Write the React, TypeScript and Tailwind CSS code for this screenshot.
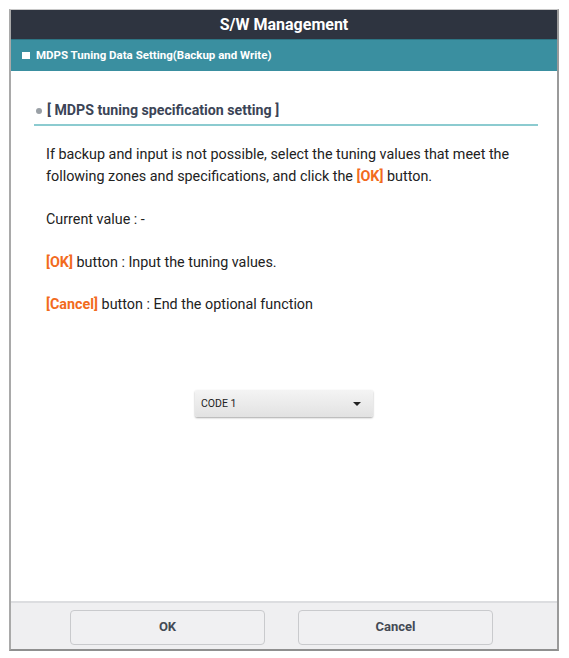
import React from 'react'

const Hl = ({ children }: { children: React.ReactNode }) => (
  <span className="font-bold text-[#f26b1d]">{children}</span>
)

export default function App() {
  return (
    <div className="w-[569px] h-[658px] bg-white pt-[9px] pl-[9px] font-['Roboto',sans-serif]">
      <div className="w-[550px] h-[642px] flex flex-col border-t border-[#c8c8c8] border-l-2 border-l-[#a9a9a9] border-r-2 border-r-[#9a9a9a] border-b-2 border-b-[#8f8f8f]">
        {/* Title bar */}
        <div className="h-[29px] bg-[#2e3440] flex items-center justify-center">
          <span className="text-white font-bold text-[16px]">S/W Management</span>
        </div>

        {/* Sub header */}
        <div className="h-[32px] bg-[#3a8fa0] border-t border-[#2d7584] flex items-center pl-[11px] gap-[6px]">
          <span className="w-[8px] h-[7px] bg-white" />
          <span className="text-white font-bold text-[11.5px]">MDPS Tuning Data Setting(Backup and Write)</span>
        </div>

        {/* Content */}
        <div className="flex-1 bg-white pl-[23px] pr-[19px] pt-[29px]">
          <div className="flex items-center gap-[5px] pl-[2px] pb-[3px] border-b-2 border-[#8ccbd0]">
            <span className="w-[6px] h-[6px] rounded-full bg-[#9aa0a6]" />
            <span className="font-bold text-[14.2px] text-[#3b4456]">[ MDPS tuning specification setting ]</span>
          </div>

          <div className="pl-[12px] text-[14.35px] text-[#222] leading-[22px]">
            <p className="mt-[18px]">
              If backup and input is not possible, select the tuning values that meet the following zones and
              specifications, and click the <Hl>[OK]</Hl> button.
            </p>
            <p className="mt-[21px]">Current value : -</p>
            <p className="mt-[21px]">
              <Hl>[OK]</Hl> button : Input the tuning values.
            </p>
            <p className="mt-[20px]">
              <Hl>[Cancel]</Hl> button : End the optional function
            </p>
          </div>

          <div className="flex mt-[74px] ml-[161px]">
            <div className="w-[178px] h-[27px] flex items-center justify-between px-[6px] bg-gradient-to-b from-[#f4f4f4] to-[#e2e2e2] shadow-[0_1px_2px_rgba(0,0,0,0.35)] rounded-[2px]">
              <span className="text-[10.5px] text-[#222]">CODE 1</span>
              <svg width="8" height="4" viewBox="0 0 8 4" className="mr-[6px]">
                <path d="M0 0 H8 L4 4 Z" fill="#222" />
              </svg>
            </div>
          </div>
        </div>

        {/* Footer buttons */}
        <div className="h-[48px] bg-[#efeff1] border-t-2 border-[#dcdde0] flex items-center pt-[2px] pl-[59px] gap-[33px]">
          <button className="w-[195px] h-[35px] rounded-[4px] border border-[#c9cacd] bg-[#f0f0f2] text-[13px] font-bold text-[#444a55]">
            OK
          </button>
          <button className="w-[195px] h-[35px] rounded-[4px] border border-[#c9cacd] bg-[#f0f0f2] text-[13px] font-bold text-[#444a55]">
            Cancel
          </button>
        </div>
      </div>
    </div>
  )
}
